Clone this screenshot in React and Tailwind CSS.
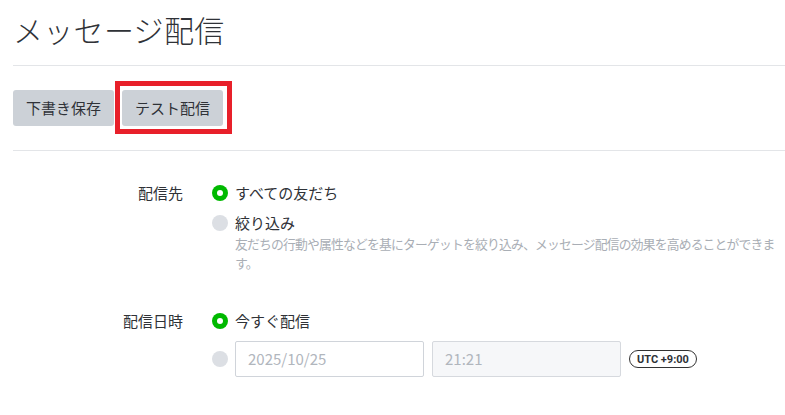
import React from "react";

const font = { fontFamily: '"Noto Sans CJK JP", "Noto Sans", sans-serif' };

function Radio({ checked }) {
  return checked ? (
    <span className="flex h-4 w-4 shrink-0 items-center justify-center rounded-full bg-[#00b900]">
      <span className="h-[6px] w-[6px] rounded-full bg-white" />
    </span>
  ) : (
    <span className="h-4 w-4 shrink-0 rounded-full bg-[#dcdfe4]" />
  );
}

export default function App() {
  return (
    <div className="min-h-[415px] bg-white px-[13px] text-[#2f3237]" style={font}>
      <h1 className="pt-[7px] pb-[13px] text-[30px] leading-[45px] tracking-[0.3px] font-light">メッセージ配信</h1>
      <div className="h-px bg-[#e3e5e8] -mr-[13px]" />
      <div className="flex gap-[8px] py-[24px]">
        <button className="h-9 rounded-[3px] bg-[#ccd1d7] px-[13px] text-[15px] leading-9 text-[#2f3237]">下書き保存</button>
        <div className="relative">
          <button className="h-9 rounded-[3px] bg-[#ccd1d7] px-[13px] text-[15px] leading-9 text-[#2f3237]">テスト配信</button>
          <div className="pointer-events-none absolute -top-[9px] -bottom-[8px] -left-[7px] -right-[9px] border-[5px] border-[#e8202a]" />
        </div>
      </div>
      <div className="h-px bg-[#e3e5e8] -mr-[13px]" />

      <div className="pt-[31px]">
        <div className="flex">
          <div className="w-[170px] shrink-0 text-right text-[15px] leading-[22px]">配信先</div>
          <div className="ml-[29px] flex flex-1 flex-col gap-[8px]">
            <div className="flex items-center gap-[7px]">
              <Radio checked />
              <span className="text-[15px] leading-[22px]">すべての友だち</span>
            </div>
            <div className="flex items-start gap-[7px]">
              <div className="flex h-[22px] items-center"><Radio /></div>
              <div className="flex-1 -mr-[12px]">
                <div className="text-[15px] leading-[22px]">絞り込み</div>
                <div className="text-[12.8px] leading-[19px] tracking-[-0.8px] text-[#a9aeb5]">友だちの行動や属性などを基にターゲットを絞り込み、メッセージ配信の効果を高めることができます。</div>
              </div>
            </div>
          </div>
        </div>

        <div className="mt-[38px] flex">
          <div className="w-[170px] shrink-0 text-right text-[15px] leading-[22px]">配信日時</div>
          <div className="ml-[29px] flex flex-1 flex-col gap-[9px]">
            <div className="flex items-center gap-[7px]">
              <Radio checked />
              <span className="text-[15px] leading-[22px]">今すぐ配信</span>
            </div>
            <div className="flex items-center gap-[7px]">
              <Radio />
              <div className="flex h-9 w-[189px] items-center rounded-[2px] border border-[#d0d4da] bg-white px-[12px] text-[15px] text-[#b1b6bd]">2025/10/25</div>
              <div className="ml-px flex h-9 w-[189px] items-center rounded-[2px] border border-[#d6d9de] bg-[#f6f7f9] px-[12px] text-[15px] text-[#b1b6bd]">21:21</div>
              <span className="ml-px flex h-[18px] items-center rounded-full border border-[#333] px-[7px] text-[11px] font-bold leading-none text-[#2f3237]" style={{ fontFamily: 'Roboto, "Liberation Sans", sans-serif' }}>UTC +9:00</span>
            </div>
          </div>
        </div>
      </div>
    </div>
  );
}
